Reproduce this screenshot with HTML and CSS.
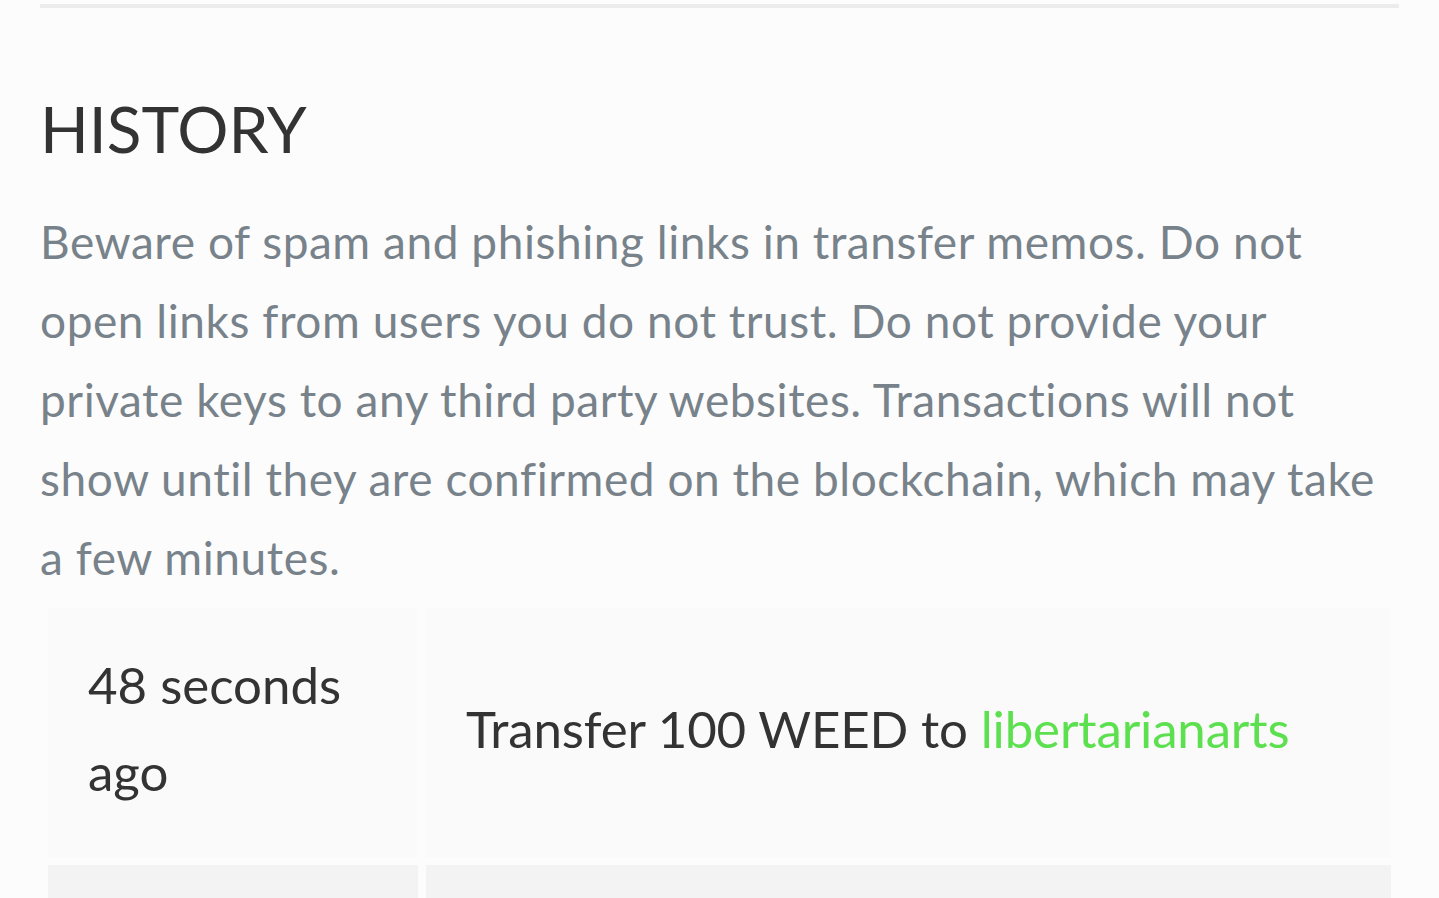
FILE: index.html
```html
<!DOCTYPE html>
<html lang="en">
<head>
  <meta charset="UTF-8">
  <meta name="viewport" content="width=device-width, initial-scale=1">
  <title>History</title>
  <link rel="stylesheet" href="styles.css">
</head>
<body>
  <div class="wallet">
    <hr class="divider">

    <!-- history -->
    <h2 class="history-title">HISTORY</h2>
    <p class="history-note">Beware of spam and phishing links in transfer memos. Do not open links from users you do not trust. Do not provide your private keys to any third party websites. Transactions will not show until they are confirmed on the blockchain, which may take a few minutes.</p>

    <table class="history-table">
      <tbody>
        <tr>
          <td class="time">48 seconds ago</td>
          <td class="op">Transfer 100 WEED to <a href="#" class="user">libertarianarts</a></td>
        </tr>
        <tr class="odd">
          <td class="time"></td>
          <td class="op"></td>
        </tr>
      </tbody>
    </table>
  </div>
</body>
</html>
```

FILE: styles.css
```css
body { margin: 0; background: #fcfcfc; font-family: 'Lato', 'Liberation Sans', sans-serif; color: #333; }
.wallet { padding: 0 40px; overflow: hidden; height: 898px; }
.divider { border: none; border-top: 4px solid #ececec; margin: 4px 0 0; }
.history-title { font-size: 64px; font-weight: normal; margin: 89px 0 0; line-height: 1; }
.history-note { font-size: 46px; letter-spacing: 0.55px; line-height: 79px; color: #78828a; margin: 41px 0 0; }
.history-table { width: 100%; border-spacing: 8px; margin-top: 3px; }
.history-table td { background: #fafafa; vertical-align: middle; font-size: 51px; line-height: 87px; padding: 33px 40px 42px; }
.history-table tr.odd td { background: #f3f3f3; height: 174px; }
.time { width: 290px; }
.op { letter-spacing: -0.15px; }
.user { color: #5de04f; text-decoration: none; }
```
